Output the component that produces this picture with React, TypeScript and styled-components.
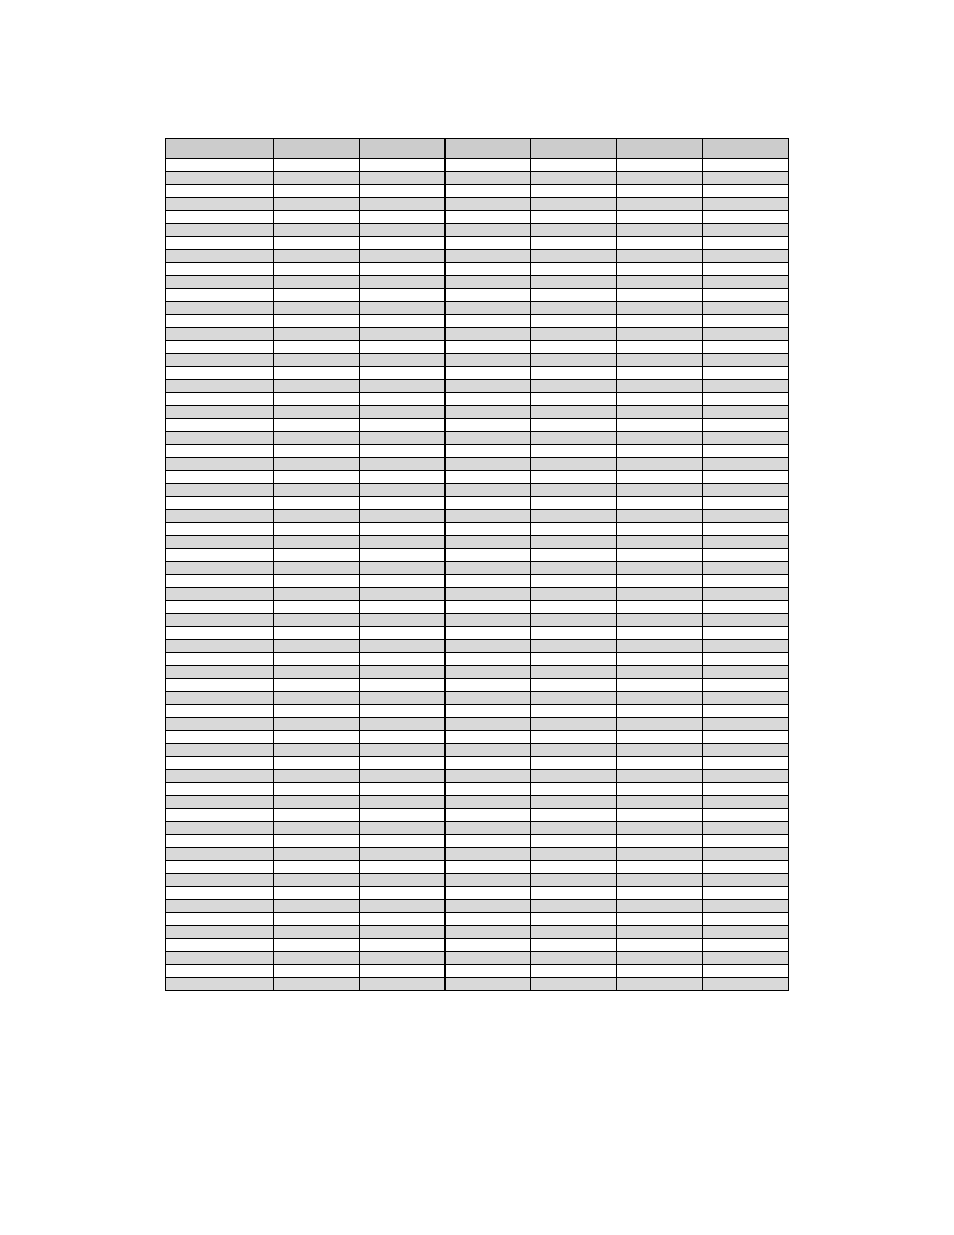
import React from "react";
import styled, {createGlobalStyle} from "styled-components";

const GlobalStyle = createGlobalStyle`
  html, body {
    margin: 0;
    padding: 0;
    background: #ffffff;
    font-family: "Liberation Sans", Arial, sans-serif;
  }
`

const columns = [108, 86, 86, 85, 86, 86, 86];
const ROW_COUNT = 64;

export default function App() {
    const rows = Array.from({length: ROW_COUNT}, (_, i) => i);

    return <>
        <GlobalStyle/>
        <StyledPage>
            <StyledTable>
                <thead>
                <tr>
                    {columns.map((w, c) =>
                        <StyledHeadCell key={c} $width={w} $thick={c === 2}/>
                    )}
                </tr>
                </thead>
                <tbody>
                {rows.map(r =>
                    <tr key={r}>
                        {columns.map((_, c) =>
                            <StyledCell key={c} $shaded={r % 2 === 1} $thick={c === 2}/>
                        )}
                    </tr>
                )}
                </tbody>
            </StyledTable>
        </StyledPage>
    </>
}

const StyledPage = styled.main`
  padding: 138px 0 0 165px;
  min-height: 1235px;
  box-sizing: border-box;
`

const StyledTable = styled.table`
  border-collapse: separate;
  border-spacing: 0;
  table-layout: fixed;
  border-top: 1px solid #000;
  border-left: 1px solid #000;
`

const StyledHeadCell = styled.th<{ $width: number, $thick: boolean }>`
  box-sizing: border-box;
  width: ${p => p.$width}px;
  height: 20px;
  padding: 0;
  background: #cccccc;
  border-right: ${p => p.$thick ? 2 : 1}px solid #000;
  border-bottom: 1px solid #000;
`

const StyledCell = styled.td<{ $shaded: boolean, $thick: boolean }>`
  box-sizing: border-box;
  height: 13px;
  padding: 0;
  background: ${p => p.$shaded ? "#d9d9d9" : "#ffffff"};
  border-right: ${p => p.$thick ? 2 : 1}px solid #000;
  border-bottom: 1px solid #000;
`
